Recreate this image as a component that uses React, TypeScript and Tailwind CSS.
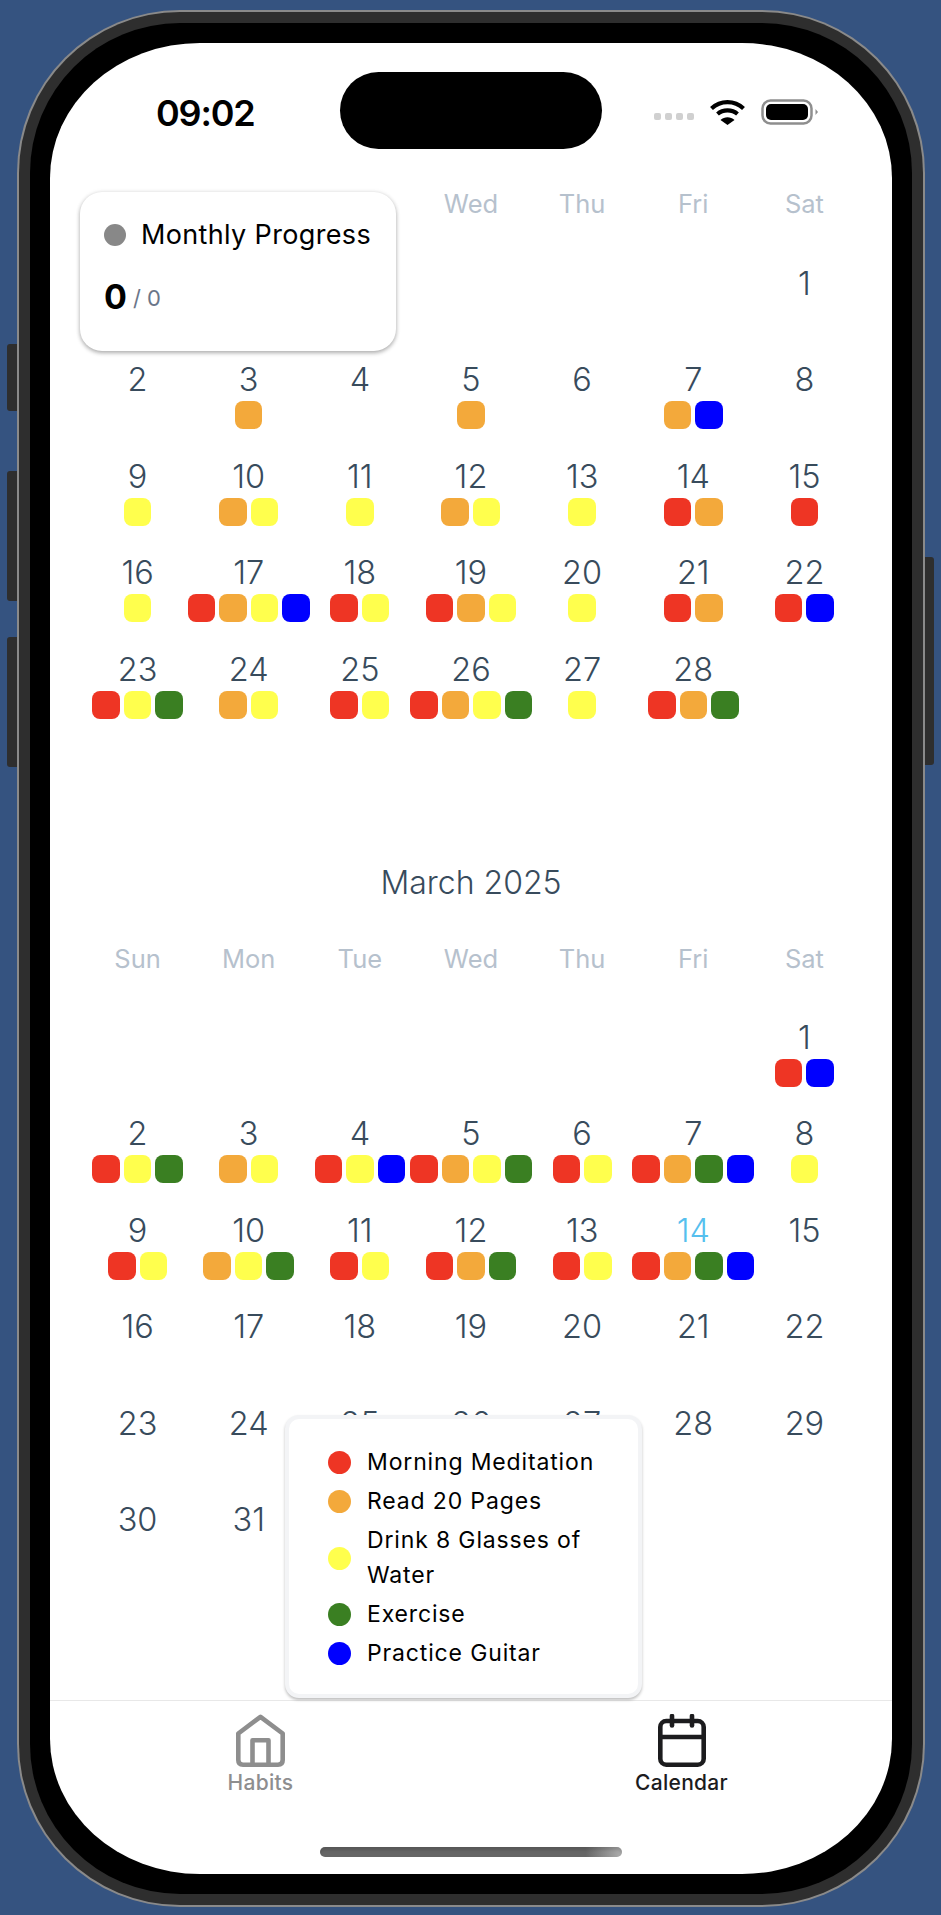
const R = "bg-[#ee3524]";
const O = "bg-[#f3a93b]";
const Y = "bg-[#ffff4d]";
const G = "bg-[#3a7f22]";
const B = "bg-[#0000ff]";

const WEEKDAYS = ["Sun", "Mon", "Tue", "Wed", "Thu", "Fri", "Sat"];

const FEB_MARKS: Record<number, string[]> = {
  3: [O],
  5: [O],
  7: [O, B],
  9: [Y],
  10: [O, Y],
  11: [Y],
  12: [O, Y],
  13: [Y],
  14: [R, O],
  15: [R],
  16: [Y],
  17: [R, O, Y, B],
  18: [R, Y],
  19: [R, O, Y],
  20: [Y],
  21: [R, O],
  22: [R, B],
  23: [R, Y, G],
  24: [O, Y],
  25: [R, Y],
  26: [R, O, Y, G],
  27: [Y],
  28: [R, O, G],
};

const MAR_MARKS: Record<number, string[]> = {
  1: [R, B],
  2: [R, Y, G],
  3: [O, Y],
  4: [R, Y, B],
  5: [R, O, Y, G],
  6: [R, Y],
  7: [R, O, G, B],
  8: [Y],
  9: [R, Y],
  10: [O, Y, G],
  11: [R, Y],
  12: [R, O, G],
  13: [R, Y],
  14: [R, O, G, B],
};

const LEGEND = [
  { color: R, label: "Morning Meditation" },
  { color: O, label: "Read 20 Pages" },
  { color: Y, label: "Drink 8 Glasses of Water" },
  { color: G, label: "Exercise" },
  { color: B, label: "Practice Guitar" },
];

function Weekdays() {
  return (
    <div className="grid grid-cols-7 h-10 pb-[2px] items-center text-center text-[25.5px] text-[#b6c1cd]">
      {WEEKDAYS.map((d) => (
        <div key={d}>{d}</div>
      ))}
    </div>
  );
}

function MonthGrid({
  offset,
  days,
  marks,
  today,
}: {
  offset: number;
  days: number;
  marks: Record<number, string[]>;
  today?: number;
}) {
  const dayList = Array.from({ length: days }, (_, i) => i + 1);
  return (
    <div className="grid grid-cols-7 auto-rows-[96.4px]">
      {Array.from({ length: offset }, (_, i) => (
        <div key={`blank-${i}`} />
      ))}
      {dayList.map((day) => (
        <div key={day} className="flex flex-col items-center">
          <div
            className={`h-11 pt-[1px] leading-[44px] text-[32.5px] font-light ${
              day === today ? "text-[#56bfee]" : "text-[#384b5c]"
            }`}
          >
            {day}
          </div>
          <div className="flex justify-center gap-1 w-full">
            {(marks[day] ?? []).map((color, i) => (
              <div key={i} className={`w-[27.5px] h-[28px] shrink-0 rounded-[8px] ${color}`} />
            ))}
          </div>
        </div>
      ))}
    </div>
  );
}

function StatusBar() {
  return (
    <div className="relative h-[142px] pt-[50px] pl-[106px] pr-[74px] flex justify-between">
      <div className="h-10 leading-[40px] text-[36px] font-semibold tracking-[-1.2px] text-black">09:02</div>
      <div className="absolute left-[290px] top-[29px] w-[262px] h-[77px] rounded-full bg-black" />
      <div className="flex items-center h-10 -mt-[1px]">
        <div className="flex gap-[4px] mt-[9px] mr-[16px]">
          <div className="w-[7px] h-[7px] rounded-[2px] bg-[#d0d0d0]" />
          <div className="w-[7px] h-[7px] rounded-[2px] bg-[#d0d0d0]" />
          <div className="w-[7px] h-[7px] rounded-[2px] bg-[#d0d0d0]" />
          <div className="w-[7px] h-[7px] rounded-[2px] bg-[#d0d0d0]" />
        </div>
        <svg width="35" height="26" viewBox="0 0 35 26" className="mr-[16px] -mt-[1px]">
          <path d="M1.5 9.5C10.5 1 24.5 1 33.5 9.5" fill="none" stroke="#000" strokeWidth="4.2" />
          <path d="M7.5 15C13 10.2 22 10.2 27.5 15" fill="none" stroke="#000" strokeWidth="4.2" />
          <path d="M10.5 21L17.5 26L24.5 21C20.5 17.4 14.5 17.4 10.5 21Z" fill="#000" />
        </svg>
        <svg width="57" height="26" viewBox="0 0 57 26" className="-mt-[1px]">
          <rect x="1.5" y="1.5" width="49" height="23" rx="8" fill="none" stroke="#8e8e8e" strokeWidth="2.5" />
          <rect x="5" y="5" width="42" height="16" rx="5" fill="#000" />
          <path d="M54.5 10L57 13L54.5 16Z" fill="#8e8e8e" />
        </svg>
      </div>
    </div>
  );
}

function HomeIcon() {
  return (
    <svg width="49" height="53" viewBox="0 0 49 53" fill="none" stroke="#8e8e8e" strokeWidth="4.6" strokeLinejoin="round">
      <path d="M24.5 2.8L2.3 19.5V46C2.3 49 4 50.7 7 50.7H42C45 50.7 46.7 49 46.7 46V19.5Z" />
      <path d="M16.5 50.7V26.3H32.5V50.7" />
    </svg>
  );
}

function CalendarIcon() {
  return (
    <svg width="48" height="53" viewBox="0 0 48 53" fill="none" stroke="#1c1c1e" strokeWidth="4.6" strokeLinecap="round">
      <rect x="2.3" y="7" width="43.4" height="43.7" rx="6" />
      <path d="M2.3 23H45.7" />
      <path d="M14 2V11.5" />
      <path d="M34 2V11.5" />
    </svg>
  );
}

export default function App() {
  return (
    <div className="relative w-[941px] h-[1915px] overflow-hidden bg-[#355380] pl-[17px] pt-[10px] font-['Inter',sans-serif]">
      <div className="absolute left-[7px] top-[344px] w-[11px] h-[67px] rounded-l-[3px] bg-[#2e2e2e]" />
      <div className="absolute left-[7px] top-[471px] w-[11px] h-[130px] rounded-l-[3px] bg-[#2e2e2e]" />
      <div className="absolute left-[7px] top-[637px] w-[11px] h-[130px] rounded-l-[3px] bg-[#2e2e2e]" />
      <div className="absolute left-[924px] top-[557px] w-[10px] h-[208px] rounded-r-[3px] bg-[#2e2e2e]" />

      <div className="relative w-[908px] h-[1897px] rounded-[163px] bg-[#8a8a8a] p-[2px]">
        <div className="w-full h-full rounded-[161px] bg-[#2e2e2e] p-[11px]">
          <div className="w-full h-full rounded-[150px] bg-black p-[20px]">
            <div className="relative flex flex-col w-full h-full rounded-[150px/135px] bg-white overflow-hidden">
              <div className="flex-1 overflow-hidden px-8">
                <div className="-mx-8">
                  <StatusBar />
                </div>
                <Weekdays />
                <div className="mt-[36px]">
                  <MonthGrid offset={6} days={28} marks={FEB_MARKS} />
                </div>
                <div className="mt-[120px] h-10 leading-[40px] text-center text-[32px] font-light text-[#384b5c]">
                  March 2025
                </div>
                <div className="mt-[37px] mb-[35px]">
                  <Weekdays />
                </div>
                <MonthGrid offset={6} days={31} marks={MAR_MARKS} today={14} />
              </div>

              <div className="h-[174px] shrink-0 border-t border-[#e8e8e8] grid grid-cols-2 pt-[13px]">
                <div className="flex flex-col items-center">
                  <HomeIcon />
                  <div className="mt-[2px] text-[21px] leading-[28px] font-medium tracking-[0.3px] text-[#8e8e8f]">Habits</div>
                </div>
                <div className="flex flex-col items-center">
                  <CalendarIcon />
                  <div className="mt-[2px] text-[21px] leading-[28px] font-medium tracking-[0.3px] text-[#1c1c1e]">Calendar</div>
                </div>
              </div>

              <div className="absolute left-[270px] top-[1804px] w-[302px] h-[10px] rounded-full bg-[linear-gradient(90deg,#666666,#666666_88%,#aeaeae)] shadow-[inset_0_3px_3px_rgba(0,0,0,0.15)]" />

              <div className="absolute left-[30px] top-[149px] w-[316px] h-[159px] rounded-[22px] bg-white shadow-[0_2px_4px_rgba(0,0,0,0.3),0_0_5px_rgba(0,0,0,0.08)] pl-[24px] pt-[23px]">
                <div className="flex items-center gap-[15px] h-[40px]">
                  <div className="w-[22px] h-[22px] rounded-full bg-[#888888]" />
                  <div className="text-[27px] font-normal tracking-[0.35px] text-black">Monthly Progress</div>
                </div>
                <div className="mt-[20px] flex items-baseline gap-[6px]">
                  <div className="text-[34px] font-bold text-black leading-[44px]">0</div>
                  <div className="-translate-y-[3px] text-[22px] text-[#6b7689]">/ 0</div>
                </div>
              </div>

              <div className="absolute left-[235px] top-[1372px] w-[357px] h-[283px] rounded-[14px] bg-white border-[4px] border-[#f3f4f6] shadow-[0_2px_3px_rgba(0,0,0,0.25)] pl-[39px] pr-[20px] pt-[26px] flex flex-col gap-[4px]">
                {LEGEND.map((item) => (
                  <div key={item.label} className="flex items-center gap-[16px]">
                    <div className={`w-[23px] h-[23px] shrink-0 rounded-full ${item.color}`} />
                    <div className="text-[23px] leading-[35px] font-normal tracking-[0.85px] text-black">{item.label}</div>
                  </div>
                ))}
              </div>
            </div>
          </div>
        </div>
      </div>
    </div>
  );
}
